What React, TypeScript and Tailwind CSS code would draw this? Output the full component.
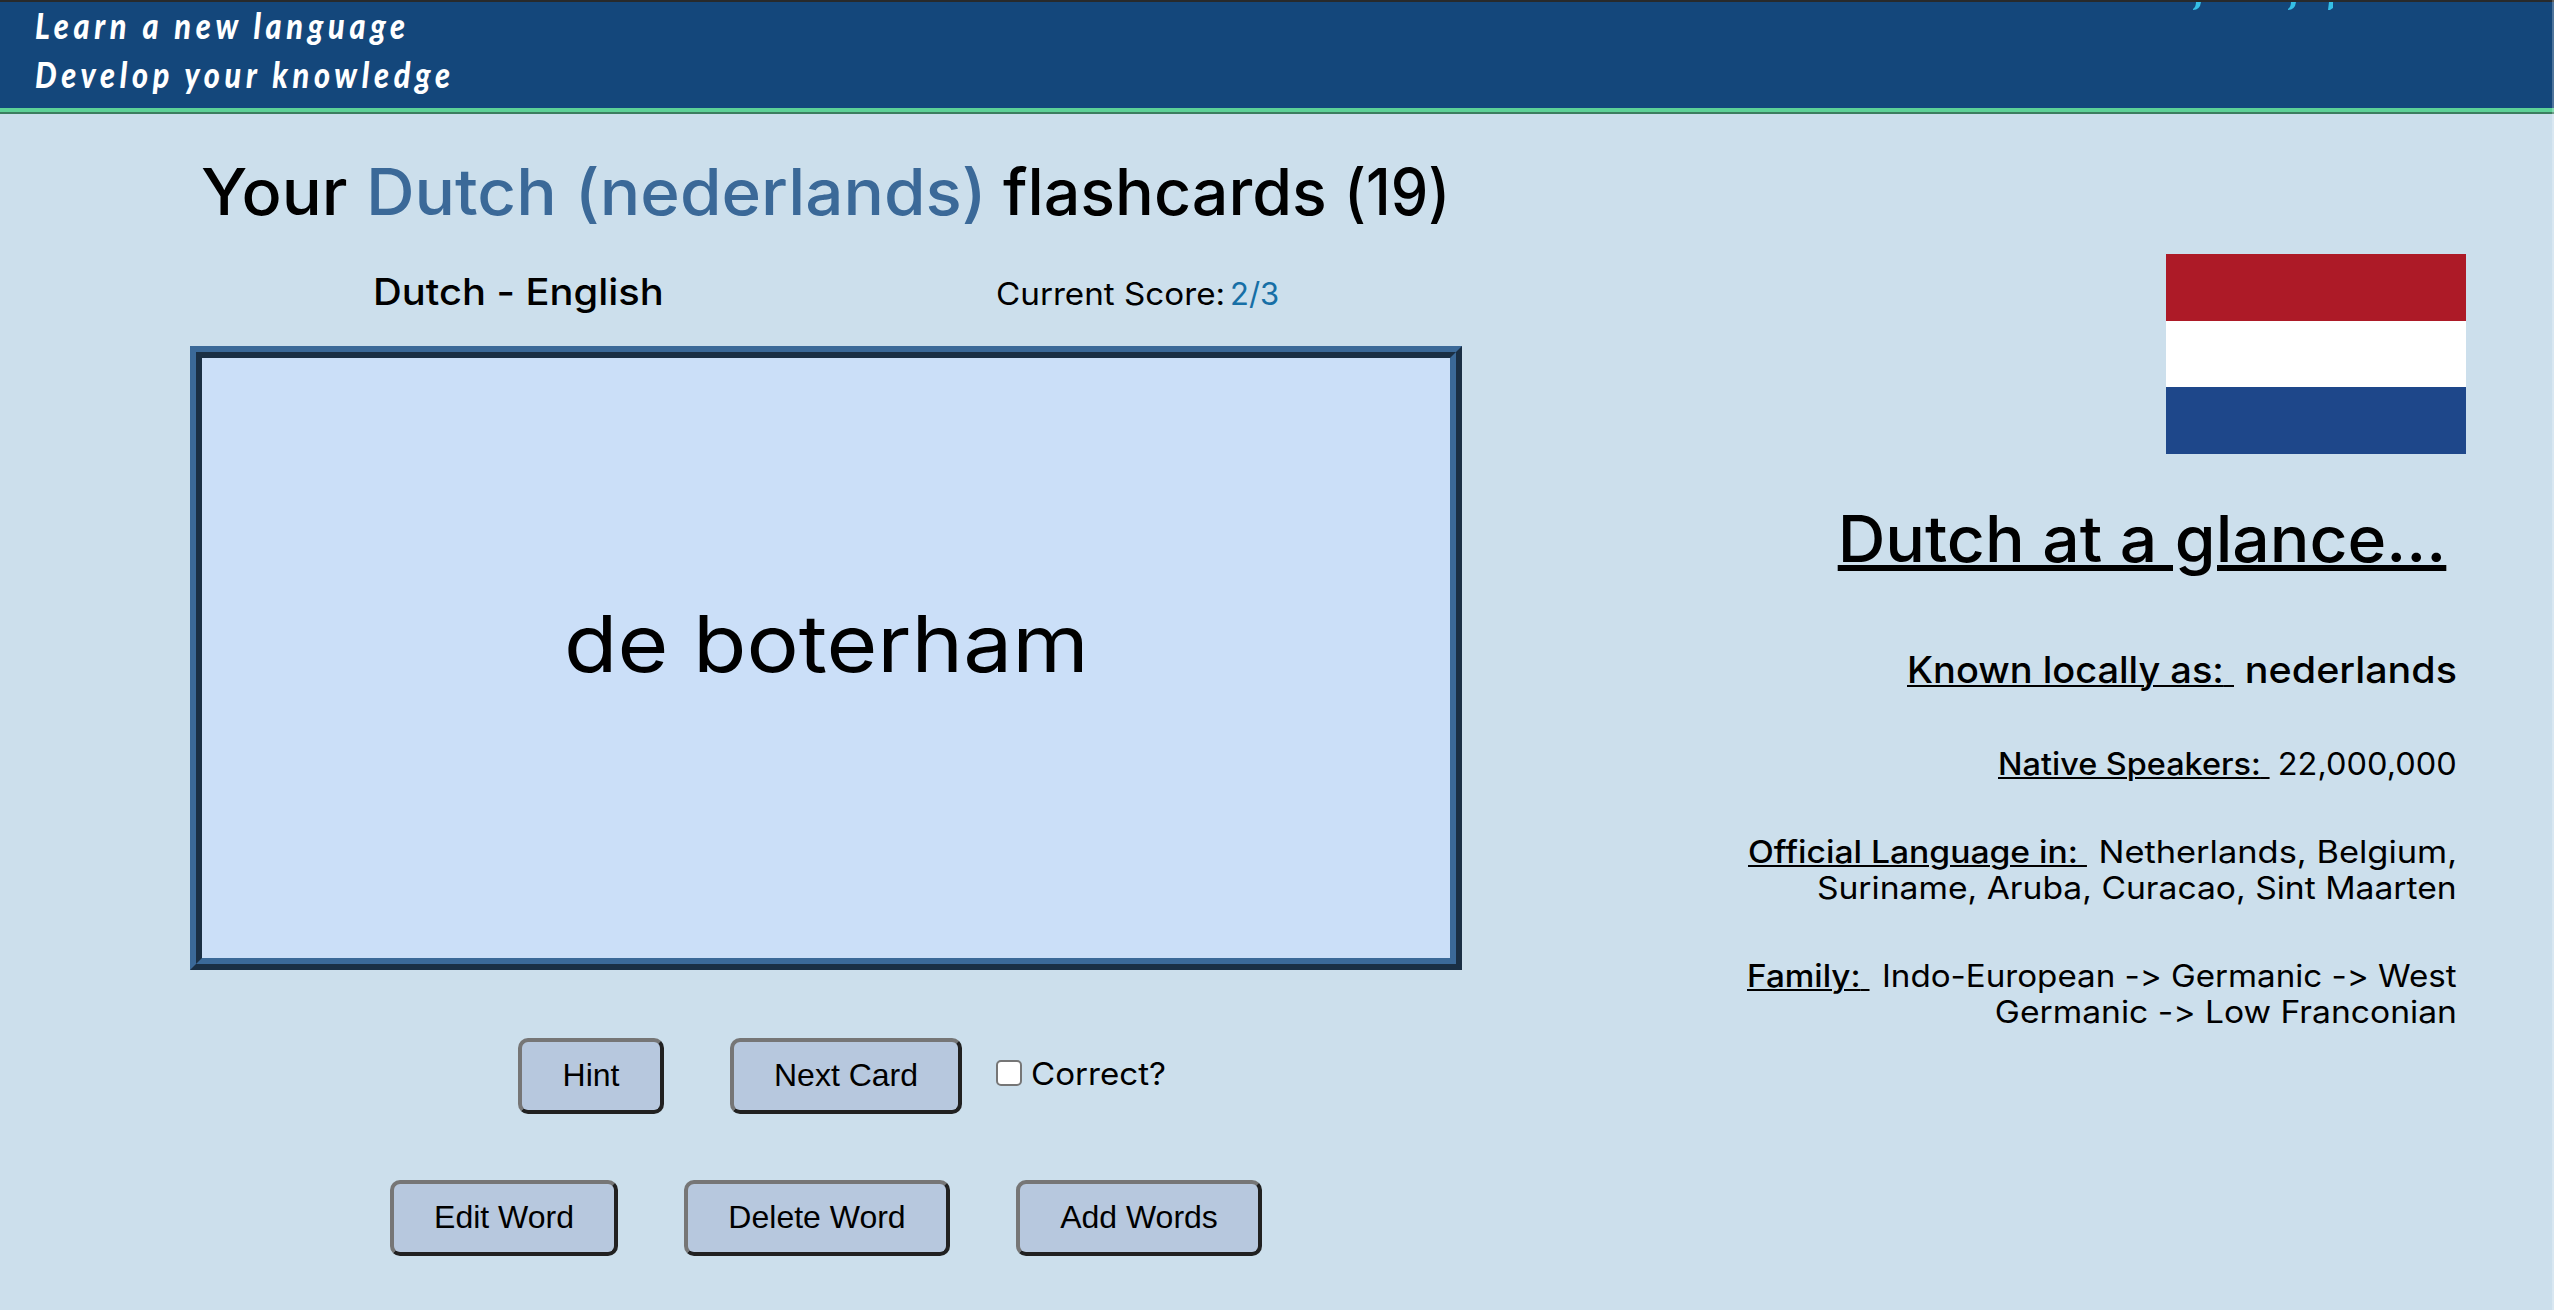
import type { ReactNode } from "react";

function ActionButton({ className, children }: { className: string; children: ReactNode }) {
  return (
    <button
      className={`h-[76px] shrink-0 whitespace-nowrap rounded-[10px] border-4 border-t-[#767676] border-l-[#767676] border-r-[#212121] border-b-[#212121] bg-[#b7c8de] pb-0.5 font-['Liberation_Sans',sans-serif] text-[32px] leading-9 ${className}`}
    >
      {children}
    </button>
  );
}

function Label({ className, children }: { className: string; children: ReactNode }) {
  return (
    <span className={`origin-left font-medium underline decoration-2 underline-offset-2 ${className}`}>
      {children}
      {"\u00a0"}
    </span>
  );
}

function Header() {
  return (
    <header className="relative h-[114px] overflow-hidden border-t-2 border-t-[#282a2b] bg-[#14477b]">
      <div className="-mt-px flex h-[107px] flex-col pl-[35px] font-['Lato',sans-serif] text-[36px] font-black italic leading-[49px] tracking-[5.5px] text-white">
        <p className="w-fit origin-left scale-x-[0.85] whitespace-nowrap">Learn a new language</p>
        <p className="w-fit origin-left scale-x-[0.85] whitespace-nowrap">Develop your knowledge</p>
      </div>
      <svg className="absolute left-[2190px] top-0 h-[10px] w-[150px]" viewBox="0 0 150 10" fill="#35bfe6">
        <path d="M6 0H11Q10 8 3 8V7Q6 5 6 0Z" />
        <path d="M101 0H106Q105 8 98 8V7Q101 5 101 0Z" />
        <path d="M139 0H143V6L140 8H138Z" />
      </svg>
      <div className="h-1 bg-[#5dd197]" />
      <div className="h-0.5 bg-[#3c7e60]" />
    </header>
  );
}

function Flashcards() {
  return (
    <section className="ml-[190px] w-[1272px]">
      <h1 className="mt-[46px] flex h-16 whitespace-nowrap pl-[11px] text-[64px] font-medium leading-[64px]">
        <span className="w-[165px] origin-left scale-x-[1.04]">Your</span>
        <span className="w-[637px] origin-left scale-x-[1.052] text-[#3b6998]">Dutch (nederlands)</span>
        <span className="w-[341px] origin-left scale-x-[1.008]">flashcards</span>
        <span className="origin-left scale-x-[0.93]">(19)</span>
      </h1>
      <div className="mt-12 flex h-10 items-baseline whitespace-nowrap pl-[183px] leading-10">
        <h2 className="w-[623px] origin-left scale-x-[1.077] text-[37px] font-medium">Dutch - English</h2>
        <p className="flex text-[31px]">
          <span className="w-[234px] origin-left scale-x-[1.071]">Current Score:</span>
          <span className="text-[#176fa6]">2/3</span>
        </p>
      </div>
      <div className="mt-[34px] flex h-[624px] items-center justify-center border-[12px] border-[#3b6998] bg-[#cbdff8] pb-[29px] [border-style:ridge]">
        <span className="scale-x-[1.105] text-[79px] leading-none">de boterham</span>
      </div>
      <div className="mt-[68px] flex pl-[328px]">
        <ActionButton className="w-[146px]">Hint</ActionButton>
        <ActionButton className="ml-[66px] w-[232px]">Next Card</ActionButton>
        <label className="ml-[34px] flex pt-[18px] text-[31px] leading-9">
          <input
            type="checkbox"
            className="mt-1 mr-[9px] size-[26px] appearance-none rounded-[5px] border-2 border-[#767676] bg-white"
          />
          <span className="origin-left scale-x-[1.068]">Correct?</span>
        </label>
      </div>
      <div className="mt-[66px] flex pl-[200px]">
        <ActionButton className="w-[228px]">Edit Word</ActionButton>
        <ActionButton className="ml-[66px] w-[266px]">Delete Word</ActionButton>
        <ActionButton className="ml-[66px] w-[246px]">Add Words</ActionButton>
      </div>
    </section>
  );
}

function Glance() {
  return (
    <aside className="mr-[97px] flex w-[710px] flex-col items-end whitespace-nowrap pt-[140px] text-[31px] leading-9">
      <div className="-mr-[9px] flex h-[200px] w-[300px] flex-col">
        <div className="flex-1 bg-[#ad1a27]" />
        <div className="flex-1 bg-white" />
        <div className="flex-1 bg-[#1e478a]" />
      </div>
      <h2 className="mr-[11px] mt-[53px] origin-right scale-x-[1.031] text-[64px] font-medium leading-[64px] underline decoration-[6px] underline-offset-[3px]">
        Dutch at a glance...
      </h2>
      <div className="mt-[79px] flex w-[550px] justify-between text-[37px] font-medium leading-[40px]">
        <Label className="scale-x-[1.026]">Known locally as:</Label>
        <span className="origin-right scale-x-[1.066]">nederlands</span>
      </div>
      <div className="mt-14 flex w-[459px] justify-between">
        <Label className="scale-x-[1.046]">Native Speakers:</Label>
        <span className="origin-right scale-x-[1.048]">22,000,000</span>
      </div>
      <div className="mt-[52px] flex w-[709px] justify-between">
        <Label className="scale-x-[1.085]">Official Language in:</Label>
        <span className="origin-right scale-x-[1.11]">Netherlands, Belgium,</span>
      </div>
      <div className="origin-right scale-x-[1.085]">Suriname, Aruba, Curacao, Sint Maarten</div>
      <div className="mt-[52px] flex w-[710px] justify-between">
        <Label className="scale-x-[1.074]">Family:</Label>
        <span className="origin-right scale-x-[1.069]">Indo-European -&gt; Germanic -&gt; West</span>
      </div>
      <div className="origin-right scale-x-[1.085]">Germanic -&gt; Low Franconian</div>
    </aside>
  );
}

export default function App() {
  return (
    <div className="relative h-[1310px] w-[2554px] overflow-hidden bg-[#ccdfec] font-['Inter',sans-serif] text-black [font-feature-settings:'calt'_0]">
      <Header />
      <main className="flex justify-between">
        <Flashcards />
        <Glance />
      </main>
      <div className="absolute inset-y-0 right-0 w-0.5 bg-white/25" />
    </div>
  );
}
